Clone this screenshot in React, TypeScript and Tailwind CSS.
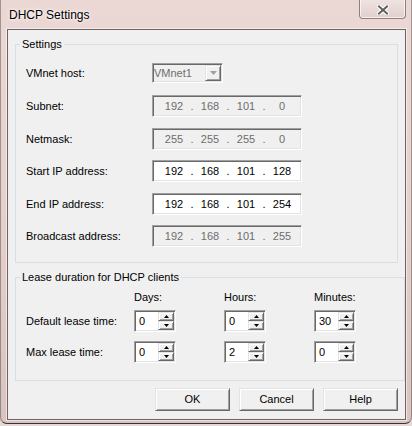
import React from "react";

const sunken =
  "border border-t-[#a0a0a0] border-l-[#a0a0a0] border-b-white border-r-white shadow-[inset_1px_1px_0_#696969,inset_-1px_-1px_0_#e3e3e3]";
const raised =
  "border border-t-[#e3e3e3] border-l-[#e3e3e3] border-b-[#696969] border-r-[#696969] shadow-[inset_1px_1px_0_#ffffff,inset_-1px_-1px_0_#a0a0a0] bg-[#f0f0f0]";

function IpField({ octets, enabled }: { octets: string[]; enabled: boolean }) {
  return (
    <div
      className={`${sunken} w-[150px] h-[22px] flex items-center pl-[7px] ${
        enabled ? "bg-white text-black" : "bg-[#f0f0f0] text-[#6d6d6d]"
      }`}
    >
      {octets.map((o, i) => (
        <React.Fragment key={i}>
          <span className="w-[28px] text-center">{o}</span>
          {i < 3 && <span className="w-[8px] text-center">.</span>}
        </React.Fragment>
      ))}
    </div>
  );
}

function Arrow({ up, color = "#000" }: { up: boolean; color?: string }) {
  return (
    <svg width="5" height="3" viewBox="0 0 5 3">
      {up ? (
        <polygon points="2.5,0 5,3 0,3" fill={color} />
      ) : (
        <polygon points="0,0 5,0 2.5,3" fill={color} />
      )}
    </svg>
  );
}

function Spin({ value }: { value: string }) {
  return (
    <div className={`${sunken} w-[42px] h-[22px] bg-white flex p-[1px]`}>
      <div className="flex-1 pl-[3px] flex items-center">{value}</div>
      <div className="flex flex-col w-[16px]">
        <div className={`${raised} h-[9px] flex items-center justify-center`}>
          <Arrow up />
        </div>
        <div className={`${raised} h-[9px] flex items-center justify-center`}>
          <Arrow up={false} />
        </div>
      </div>
    </div>
  );
}

export default function App() {
  const rows: { label: string; octets: string[]; enabled: boolean; mt: string }[] = [
    { label: "Subnet:", octets: ["192", "168", "101", "0"], enabled: false, mt: "mt-[12px]" },
    { label: "Netmask:", octets: ["255", "255", "255", "0"], enabled: false, mt: "mt-[11px]" },
    { label: "Start IP address:", octets: ["192", "168", "101", "128"], enabled: true, mt: "mt-[10px]" },
    { label: "End IP address:", octets: ["192", "168", "101", "254"], enabled: true, mt: "mt-[11px]" },
    { label: "Broadcast address:", octets: ["192", "168", "101", "255"], enabled: false, mt: "mt-[10px]" },
  ];

  return (
    <div className="w-[412px] h-[426px] bg-[#e6d8d6] font-['Liberation_Sans',Arial,sans-serif] text-[11px] text-black overflow-hidden">
      <div className="w-[412px] h-[424px] flex flex-col pl-[6px] pr-[5px] pb-[3px] rounded-b-[7px] border-x border-b border-x-[#00000050] border-b-[#000000c0] bg-gradient-to-b from-[#ebd7d3] via-[#e5d0cc] to-[#d8c3c0]">
        {/* title bar */}
        <div className="h-[29px] flex justify-between">
          <div className="pl-[2px] flex items-center text-[12px] [text-shadow:0_0_6px_#fff,0_0_3px_#fff]">
            DHCP Settings
          </div>
          <div className="w-[47px] h-[19px] rounded-b-[4px] border border-t-0 border-[#8d7f7d] bg-gradient-to-b from-[#efe3e1] to-[#e0cfcc] shadow-[inset_0_-1px_0_#ffffffaa,inset_1px_0_0_#ffffffaa,inset_-1px_0_0_#ffffffaa] flex items-center justify-center pt-[2px]">
            <svg width="12" height="10" viewBox="0 0 12 10">
              <path d="M2 1.5 L10 8.5 M10 1.5 L2 8.5" stroke="#ffffff" strokeWidth="4.2" strokeLinecap="square" />
              <path d="M2 1.5 L10 8.5 M10 1.5 L2 8.5" stroke="#606060" strokeWidth="2" strokeLinecap="square" />
            </svg>
          </div>
        </div>

        {/* client area */}
        <div className="w-[399px] bg-[#f0f0f0] border border-[#6e6262] shadow-[0_0_0_1px_rgba(255,255,255,0.55)] flex flex-col px-[7px] pt-[7px] pb-[8px]">
          <fieldset className="border border-[#d5dfe5] px-0 m-0">
            <legend className="ml-[4px] px-[2px] leading-[14px]">Settings</legend>
            <div className="pl-[10px] pb-[15px] flex flex-col">
              <div className="flex mt-[12px] h-[20px]">
                <div className="w-[126px] flex items-center">VMnet host:</div>
                <div className={`${sunken} w-[71px] h-[20px] bg-[#f0f0f0] text-[#6d6d6d] flex p-[1px]`}>
                  <div className="flex-1 flex items-center">VMnet1</div>
                  <div className={`${raised} w-[16px] h-[16px] flex items-center justify-center`}>
                    <svg width="7" height="4" viewBox="0 0 7 4">
                      <polygon points="0,0 7,0 3.5,4" fill="#a0a0a0" />
                    </svg>
                  </div>
                </div>
              </div>
              {rows.map((r) => (
                <div key={r.label} className={`flex ${r.mt} h-[22px]`}>
                  <div className="w-[126px] flex items-center">{r.label}</div>
                  <IpField octets={r.octets} enabled={r.enabled} />
                </div>
              ))}
            </div>
          </fieldset>

          <fieldset className="border border-[#d5dfe5] px-0 m-0 mt-[7px]">
            <legend className="ml-[4px] px-[2px] leading-[14px]">Lease duration for DHCP clients</legend>
            <div className="pl-[10px] pb-[17px] grid grid-cols-[108px_90px_90px_90px]">
              <div className="mt-[6px] h-[14px]" />
              <div className="mt-[6px] h-[14px] leading-[14px]">Days:</div>
              <div className="mt-[6px] h-[14px] leading-[14px]">Hours:</div>
              <div className="mt-[6px] h-[14px] leading-[14px]">Minutes:</div>

              <div className="mt-[6px] h-[22px] flex items-center">Default lease time:</div>
              <div className="mt-[6px]"><Spin value="0" /></div>
              <div className="mt-[6px]"><Spin value="0" /></div>
              <div className="mt-[6px]"><Spin value="30" /></div>

              <div className="mt-[9px] h-[22px] flex items-center">Max lease time:</div>
              <div className="mt-[9px]"><Spin value="0" /></div>
              <div className="mt-[9px]"><Spin value="2" /></div>
              <div className="mt-[9px]"><Spin value="0" /></div>
            </div>
          </fieldset>

          <div className="mt-[7px] flex justify-end gap-[9px]">
            {["OK", "Cancel", "Help"].map((b) => (
              <button key={b} className={`${raised} w-[75px] h-[23px] flex items-center justify-center`}>
                {b}
              </button>
            ))}
          </div>
        </div>
      </div>
    </div>
  );
}
